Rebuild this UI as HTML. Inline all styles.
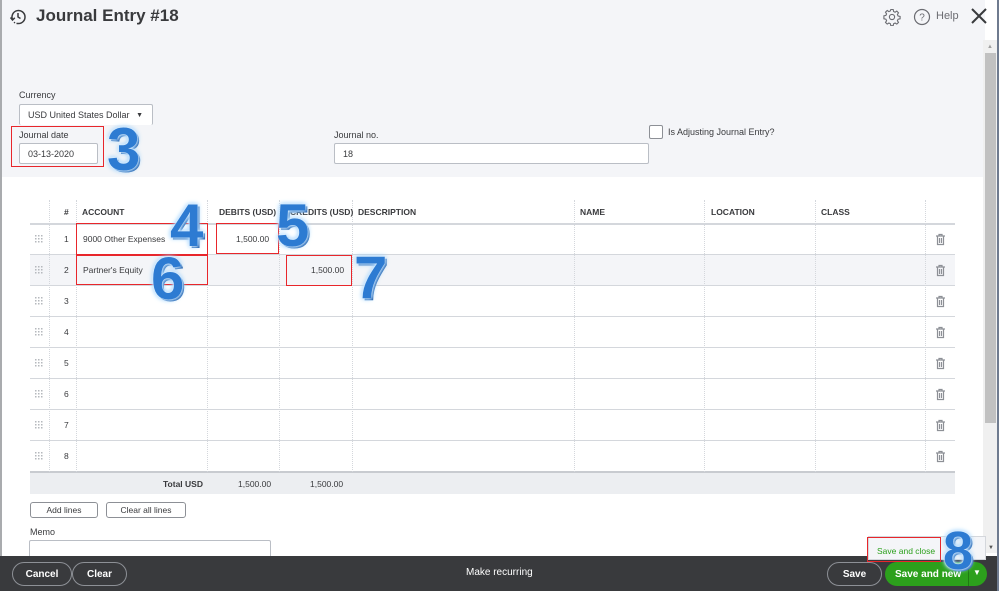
<!DOCTYPE html>
<html><head><meta charset="utf-8"><style>
*{box-sizing:border-box;margin:0;padding:0}
body{width:999px;height:591px;overflow:hidden;position:relative;background:#fff;font-family:"Liberation Sans",sans-serif;color:#393a3d}
.a{position:absolute}
.hdr{left:0;top:0;width:985px;height:177px;background:#f4f5f8}
.lbl{font-size:9px;color:#393a3d}
.inp{background:#fff;border:1px solid #babec5;border-radius:2px;font-size:9px;padding-left:8px;display:flex;align-items:center}
.red{border:1.5px solid #e8262b !important}
.num{font-weight:bold;font-size:60px;color:#2d7bd2;line-height:1;text-shadow:0 0 2px #fff,0 0 4px #9fd3ff,0 0 6px #9fd3ff,2px 2px 0 #1d5aa8}
.th{font-size:8.5px;font-weight:bold;color:#393a3d;top:207px}
.vl{width:0;border-left:1px dotted #d4d7dc}
.hl{height:1px;background:#d4d7dc;left:30px;width:925px}
.cell{font-size:8.5px}
.btn{border:1px solid #8d9096;border-radius:3px;font-size:8.5px;display:flex;align-items:center;justify-content:center;background:#fff}
.fb{border:1px solid #8d9096;border-radius:14px;color:#fff;font-weight:bold;font-size:10px;display:flex;align-items:center;justify-content:center}
</style></head><body>
<div class="a hdr"></div>
<div class="a" style="left:0;top:0;width:2px;height:591px;background:#a9abae"></div>
<svg class="a" style="left:9px;top:8px" width="18" height="18" viewBox="0 0 18 18" fill="none" stroke="#393a3d" stroke-width="1.5"><path d="M3.5 11.5A6.5 6.5 0 1 1 9 15.5"/><path d="M9 15.5a6.5 6.5 0 0 1-4-1.3" stroke-dasharray="1.5 1.5"/><path d="M1.5 9.5l2 2.5 2.3-2.2"/><path d="M9 5v4l2.5 1.5"/></svg>
<div class="a" style="left:36px;top:6px;font-size:17px;font-weight:bold;color:#393a3d">Journal Entry #18</div>
<svg class="a" style="left:883px;top:8px" width="18" height="18" viewBox="0 0 18 18" fill="none" stroke="#6b6c72" stroke-width="1.1"><circle cx="9" cy="9" r="2.6"/><path d="M7.8 1.5h2.4l.4 2 1.5.7 1.7-1.1 1.7 1.7-1.1 1.7.7 1.5 2 .4v2.4l-2 .4-.7 1.5 1.1 1.7-1.7 1.7-1.7-1.1-1.5.7-.4 2H7.8l-.4-2-1.5-.7-1.7 1.1-1.7-1.7 1.1-1.7-.7-1.5-2-.4V7.8l2-.4.7-1.5-1.1-1.7 1.7-1.7 1.7 1.1 1.5-.7z"/></svg>
<svg class="a" style="left:913px;top:8px" width="18" height="18" viewBox="0 0 18 18" fill="none" stroke="#6b6c72" stroke-width="1.2"><circle cx="9" cy="9" r="7.5"/><text x="9" y="12.5" font-size="10" text-anchor="middle" fill="#6b6c72" stroke="none" font-family="Liberation Sans">?</text></svg>
<div class="a" style="left:936px;top:10px;font-size:11px;color:#6b6c72">Help</div>
<svg class="a" style="left:970px;top:7px" width="18" height="18" viewBox="0 0 18 18" stroke="#393a3d" stroke-width="2"><path d="M2 2l14 14M16 2L2 16"/></svg>
<div class="a" style="left:983px;top:40px;width:14px;height:513px;background:#f0f0f0"></div>
<div class="a" style="left:985px;top:53px;width:11px;height:370px;background:#c1c1c1"></div>
<div class="a" style="left:987px;top:44px;font-size:6px;color:#a0a0a0">▲</div>
<div class="a" style="left:997px;top:0;width:2px;height:591px;background:#6f7b8f"></div>
<div class="a lbl" style="left:19px;top:90px">Currency</div>
<div class="a inp" style="left:19px;top:104px;width:134px;height:21px;border-bottom:none">USD United States Dollar<span style="position:absolute;right:9px;font-size:7px">▼</span></div>
<div class="a red" style="left:11px;top:126px;width:93px;height:41px"></div>
<div class="a lbl" style="left:19px;top:130px">Journal date</div>
<div class="a inp" style="left:19px;top:143px;width:79px;height:21px">03-13-2020</div>
<div class="a num" style="left:107px;top:120px">3</div>
<div class="a lbl" style="left:334px;top:130px">Journal no.</div>
<div class="a inp" style="left:334px;top:143px;width:315px;height:21px">18</div>
<div class="a" style="left:649px;top:125px;width:14px;height:14px;border:1px solid #8d9096;border-radius:2px;background:#fff"></div>
<div class="a" style="left:668px;top:127px;font-size:9px">Is Adjusting Journal Entry?</div>
<div class="a" style="left:30px;top:254px;width:925px;height:31px;background:#f4f5f8"></div>
<div class="a" style="left:30px;top:472px;width:925px;height:22px;background:#eceef1"></div>
<div class="a hl" style="top:223px;height:2px"></div>
<div class="a hl" style="top:254px"></div><div class="a hl" style="top:285px"></div><div class="a hl" style="top:316px"></div><div class="a hl" style="top:347px"></div><div class="a hl" style="top:378px"></div><div class="a hl" style="top:409px"></div><div class="a hl" style="top:440px"></div>
<div class="a hl" style="top:471px;height:2px;background:#c8cbd0"></div>
<div class="a vl" style="left:49px;top:200px;height:272px"></div>
<div class="a vl" style="left:76px;top:200px;height:272px"></div>
<div class="a vl" style="left:207px;top:200px;height:272px"></div>
<div class="a vl" style="left:279px;top:200px;height:272px"></div>
<div class="a vl" style="left:352px;top:200px;height:272px"></div>
<div class="a vl" style="left:574px;top:200px;height:272px"></div>
<div class="a vl" style="left:704px;top:200px;height:272px"></div>
<div class="a vl" style="left:815px;top:200px;height:272px"></div>
<div class="a vl" style="left:925px;top:200px;height:272px"></div>
<div class="a th" style="left:64px">#</div>
<div class="a th" style="left:82px">ACCOUNT</div>
<div class="a th" style="left:219px">DEBITS (USD)</div>
<div class="a th" style="left:290px">CREDITS (USD)</div>
<div class="a th" style="left:358px">DESCRIPTION</div>
<div class="a th" style="left:580px">NAME</div>
<div class="a th" style="left:711px">LOCATION</div>
<div class="a th" style="left:821px">CLASS</div>
<div class="a cell" style="left:64px;top:234px">1</div>
<div class="a cell" style="left:64px;top:265px">2</div>
<div class="a cell" style="left:64px;top:296px">3</div>
<div class="a cell" style="left:64px;top:327px">4</div>
<div class="a cell" style="left:64px;top:358px">5</div>
<div class="a cell" style="left:64px;top:389px">6</div>
<div class="a cell" style="left:64px;top:420px">7</div>
<div class="a cell" style="left:64px;top:451px">8</div>
<svg class="a" style="left:0;top:0" width="999" height="591">
<defs><g id="dr" fill="#b5b8bd"><rect x="0" y="0" width="1.5" height="1.5"/><rect x="3" y="0" width="1.5" height="1.5"/><rect x="6" y="0" width="1.5" height="1.5"/><rect x="0" y="3" width="1.5" height="1.5"/><rect x="3" y="3" width="1.5" height="1.5"/><rect x="6" y="3" width="1.5" height="1.5"/><rect x="0" y="6" width="1.5" height="1.5"/><rect x="3" y="6" width="1.5" height="1.5"/><rect x="6" y="6" width="1.5" height="1.5"/></g>
<g id="tr" fill="none" stroke="#8d9096" stroke-width="1.2"><path d="M0 2h9M3 2V0.5h3V2M1.5 2.5v8h6v-8M3.5 4v5M5.5 4v5"/></g></defs>
<use href="#dr" x="35" y="235"/><use href="#dr" x="35" y="266"/><use href="#dr" x="35" y="297"/><use href="#dr" x="35" y="328"/><use href="#dr" x="35" y="359"/><use href="#dr" x="35" y="390"/><use href="#dr" x="35" y="421"/><use href="#dr" x="35" y="452"/>
<use href="#tr" x="936" y="234"/><use href="#tr" x="936" y="265"/><use href="#tr" x="936" y="296"/><use href="#tr" x="936" y="327"/><use href="#tr" x="936" y="358"/><use href="#tr" x="936" y="389"/><use href="#tr" x="936" y="420"/><use href="#tr" x="936" y="451"/>
</svg>
<div class="a red" style="left:76px;top:223px;width:132px;height:32px"></div>
<div class="a cell" style="left:83px;top:234px">9000 Other Expenses</div>
<div class="a red" style="left:216px;top:223px;width:63px;height:31px"></div>
<div class="a cell" style="left:236px;top:234px">1,500.00</div>
<div class="a red" style="left:76px;top:255px;width:132px;height:30px"></div>
<div class="a cell" style="left:83px;top:265px">Partner's Equity</div>
<div class="a red" style="left:286px;top:255px;width:66px;height:31px"></div>
<div class="a cell" style="left:311px;top:265px">1,500.00</div>
<div class="a num" style="left:170px;top:196px">4</div>
<div class="a num" style="left:276px;top:196px">5</div>
<div class="a num" style="left:151px;top:249px">6</div>
<div class="a num" style="left:354px;top:248px">7</div>
<div class="a cell" style="left:163px;top:479px;font-weight:bold">Total USD</div>
<div class="a cell" style="left:238px;top:479px">1,500.00</div>
<div class="a cell" style="left:310px;top:479px">1,500.00</div>
<div class="a btn" style="left:30px;top:502px;width:68px;height:16px">Add lines</div>
<div class="a btn" style="left:106px;top:502px;width:80px;height:16px">Clear all lines</div>
<div class="a lbl" style="left:30px;top:527px">Memo</div>
<div class="a" style="left:29px;top:540px;width:242px;height:20px;border:1px solid #babec5;border-radius:2px"></div>
<div class="a" style="left:0;top:556px;width:997px;height:35px;background:#393a3d"></div>
<div class="a fb" style="left:12px;top:562px;width:60px;height:24px">Cancel</div>
<div class="a fb" style="left:72px;top:562px;width:55px;height:24px">Clear</div>
<div class="a" style="left:466px;top:567px;color:#fff;font-size:10px">Make recurring</div>
<div class="a fb" style="left:827px;top:562px;width:55px;height:24px">Save</div>
<div class="a" style="left:885px;top:562px;width:102px;height:24px;background:#2ca01c;border-radius:12px;color:#fff;font-weight:bold;font-size:10px;display:flex;align-items:center;padding-left:10px">Save and new</div>
<div class="a" style="left:968px;top:562px;width:1px;height:24px;background:#1f7a12"></div>
<div class="a" style="left:973px;top:568px;color:#fff;font-size:8px">▼</div>
<div class="a" style="left:868px;top:536px;width:118px;height:24px;background:#f4f5f8;border:1px solid #d4d7dc"></div>
<div class="a red" style="left:867px;top:537px;width:74px;height:25px"></div>
<div class="a" style="left:877px;top:546px;font-size:8.5px;color:#2ca01c">Save and close</div>
<div class="a" style="left:988px;top:545px;font-size:6px;color:#555">▼</div>
<div class="a num" style="left:943px;top:524px;font-size:54px">8</div>
</body></html>
